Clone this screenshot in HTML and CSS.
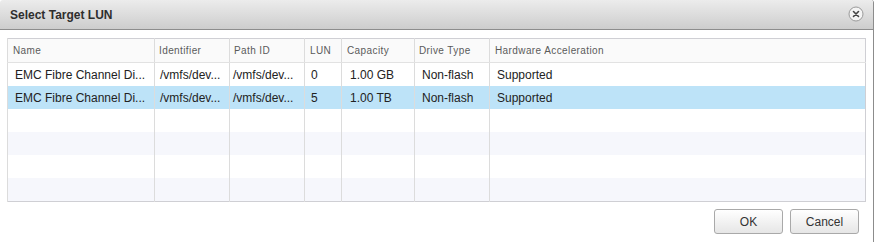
FILE: index.html
```html
<!DOCTYPE html>
<html lang="en">
<head>
    <meta charset="UTF-8">
    <title>Select Target LUN</title>
    <link rel="stylesheet" href="styles.css">
</head>
<body>
    <div class="dialog">
        <div class="titlebar">
            <span class="title">Select Target LUN</span>
            <span class="close">
                <svg width="16" height="16" viewBox="0 0 16 16">
                    <circle cx="8" cy="8" r="7" fill="#f4f4f4" stroke="#9a9a9a" stroke-width="1"/>
                    <path d="M5.5 5.5 L10.5 10.5 M10.5 5.5 L5.5 10.5" stroke="#444" stroke-width="1.6" stroke-linecap="round"/>
                </svg>
            </span>
        </div>

        <div class="content">
            <table class="grid">
                <colgroup>
                    <col style="width:147px">
                    <col style="width:75px">
                    <col style="width:75px">
                    <col style="width:37px">
                    <col style="width:73px">
                    <col style="width:75px">
                    <col>
                </colgroup>
                <thead>
                    <tr>
                        <th>Name</th>
                        <th>Identifier</th>
                        <th>Path ID</th>
                        <th>LUN</th>
                        <th>Capacity</th>
                        <th>Drive Type</th>
                        <th>Hardware Acceleration</th>
                    </tr>
                </thead>
                <tbody>
                    <tr>
                        <td>EMC Fibre Channel Di...</td>
                        <td>/vmfs/dev...</td>
                        <td>/vmfs/dev...</td>
                        <td>0</td>
                        <td>1.00 GB</td>
                        <td>Non-flash</td>
                        <td>Supported</td>
                    </tr>
                    <tr class="selected">
                        <td>EMC Fibre Channel Di...</td>
                        <td>/vmfs/dev...</td>
                        <td>/vmfs/dev...</td>
                        <td>5</td>
                        <td>1.00 TB</td>
                        <td>Non-flash</td>
                        <td>Supported</td>
                    </tr>
                    <tr class="empty"><td></td><td></td><td></td><td></td><td></td><td></td><td></td></tr>
                    <tr class="empty stripe"><td></td><td></td><td></td><td></td><td></td><td></td><td></td></tr>
                    <tr class="empty"><td></td><td></td><td></td><td></td><td></td><td></td><td></td></tr>
                    <tr class="empty stripe"><td></td><td></td><td></td><td></td><td></td><td></td><td></td></tr>
                </tbody>
            </table>

            <div class="buttons">
                <button class="btn">OK</button>
                <button class="btn">Cancel</button>
            </div>
        </div>
    </div>
</body>
</html>
```

FILE: styles.css
```css
html, body {
    margin: 0;
    padding: 0;
    background-color: #fff;
}
body {
    font-family: "Liberation Sans", Arial, sans-serif;
    width: 874px;
    height: 242px;
    overflow: hidden;
}
.dialog {
    box-sizing: border-box;
    width: 874px;
    height: 242px;
    border-right: 1px solid #8c8c8c;
    border-top-left-radius: 3px;
    border-top-right-radius: 3px;
    background-color: #fff;
}
.titlebar {
    height: 29px;
    border-bottom: 1px solid #8d8d8d;
    background: linear-gradient(#ececec, #cdcdcd);
    display: flex;
    align-items: center;
    justify-content: space-between;
    padding: 0 9px 0 10px;
    border-top-left-radius: 3px;
    border-top-right-radius: 3px;
}
.title {
    font-size: 12px;
    font-weight: bold;
    color: #2e2e2e;
    margin-top: 1px;
}
.close {
    display: flex;
    margin-top: -1px;
}
.content {
    padding: 8px 8px 0 7px;
}
.grid {
    width: 859px;
    border-collapse: collapse;
    table-layout: fixed;
    border: 1px solid #cfcfd4;
}
.grid th {
    height: 23px;
    padding: 0 0 0 4px;
    text-align: left;
    font-size: 10px;
    font-weight: normal;
    letter-spacing: 0.4px;
    color: #5a5a5a;
    background-color: #fafafa;
    border-left: 1px solid #dcdcdc;
    border-bottom: 1px solid #e2e2e2;
    white-space: nowrap;
    overflow: hidden;
}
.grid th:nth-child(1),
.grid th:nth-child(4),
.grid th:nth-child(5),
.grid th:nth-child(7) {
    padding-left: 5px;
}
.grid td {
    height: 23px;
    padding: 0 0 0 6px;
    font-size: 12px;
    color: #222;
    border-left: 1px solid #dcdcdc;
    white-space: nowrap;
    overflow: hidden;
}
.grid td:nth-child(1) { padding-left: 7px; }
.grid td:nth-child(2) { padding-left: 5px; }
.grid td:nth-child(3) { padding-left: 3px; }
.grid td:nth-child(4) { padding-left: 6px; }
.grid td:nth-child(5) { padding-left: 8px; }
.grid td:nth-child(6) { padding-left: 7px; }
.grid td:nth-child(7) { padding-left: 7px; }
.grid tr.selected td {
    background-color: #bde3f8;
}
.grid tr.stripe td {
    background-color: #f6f7fc;
}
.buttons {
    display: flex;
    justify-content: flex-end;
    gap: 7px;
    margin-top: 7px;
    padding-right: 6px;
}
.btn {
    width: 69px;
    height: 25px;
    font-family: "Liberation Sans", Arial, sans-serif;
    font-size: 12px;
    color: #333;
    background: linear-gradient(#ffffff, #e6e6e6);
    border: 1px solid #a9a9a9;
    border-radius: 3px;
    padding: 0;
}
```
